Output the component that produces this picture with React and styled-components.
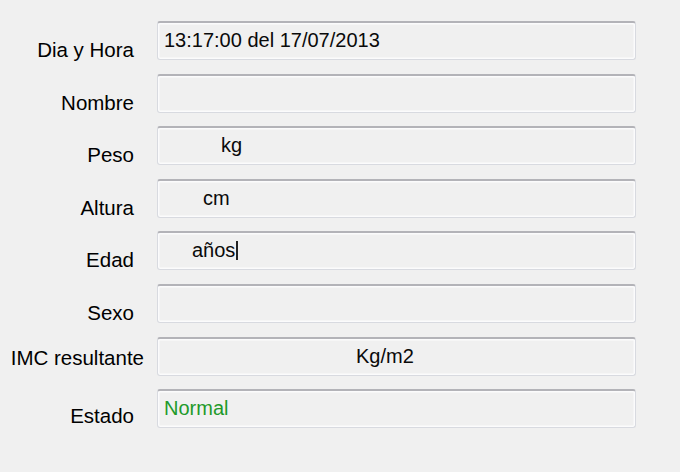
import React from "react";
import styled, { createGlobalStyle } from "styled-components";

const Global = createGlobalStyle`
  html, body { margin: 0; padding: 0; background: #f0f0f0; }
  body { width: 680px; height: 472px; overflow: hidden; font-family: "Liberation Sans", Arial, sans-serif; }
`;

const Form = styled.div`
  display: grid;
  grid-template-columns: 157px 479px;
  grid-auto-rows: 39px;
  row-gap: 13.6px;
  padding-top: 21px;
`;

const Label = styled.div`
  display: flex;
  align-items: flex-end;
  justify-content: flex-end;
  padding-right: ${(p) => (p.$wide ? 13 : 23)}px;
  margin-bottom: ${(p) => -1 + (p.$lift || 0)}px;
  font-size: 20.5px;
  line-height: 23px;
  color: #000;
  white-space: nowrap;
`;

const Field = styled.div`
  box-sizing: border-box;
  display: flex;
  align-items: center;
  padding-left: ${(p) => p.$indent || 6}px;
  padding-bottom: 1px;
  background: #f0f0f0;
  border: 1px solid #d8dae0;
  border-top: 2px solid #b3b3b8;
  border-radius: 3px;
  box-shadow: inset 0 0 0 1.5px #fbfbfc;
  font-size: 20px;
  color: ${(p) => p.$color || "#0a0a0a"};
  white-space: nowrap;
`;

const Caret = styled.span`
  display: inline-block;
  width: 1.5px;
  height: 19px;
  background: #222;
  margin-left: 1px;
  vertical-align: -3px;
`;

export default function App() {
  return (
    <>
      <Global />
      <Form>
        <Label>Dia y Hora</Label>
        <Field>13:17:00 del 17/07/2013</Field>

        <Label>Nombre</Label>
        <Field />

        <Label>Peso</Label>
        <Field $indent={63}>kg</Field>

        <Label>Altura</Label>
        <Field $indent={45}>cm</Field>

        <Label>Edad</Label>
        <Field $indent={34}>
          <span>
            años
            <Caret />
          </span>
        </Field>

        <Label>Sexo</Label>
        <Field />

        <Label $wide $lift={8}>IMC resultante</Label>
        <Field $indent={198}>Kg/m2</Field>

        <Label $lift={2}>Estado</Label>
        <Field $indent={6} $color="#1e9a2a">
          Normal
        </Field>
      </Form>
    </>
  );
}
